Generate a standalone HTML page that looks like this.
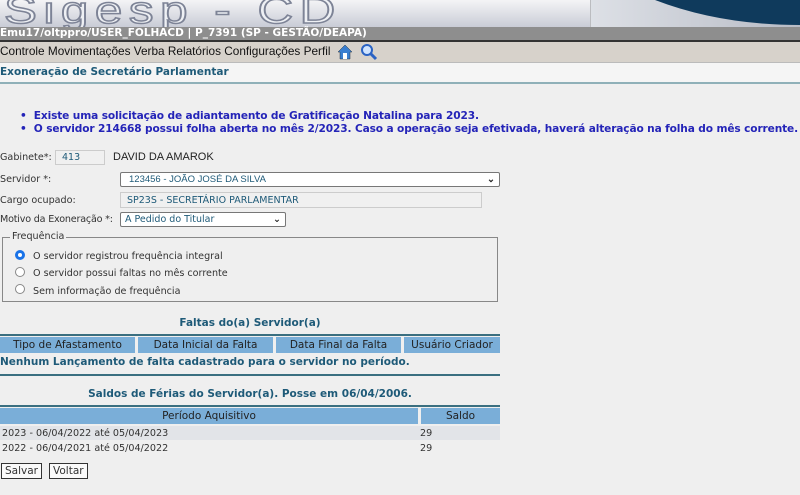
<!DOCTYPE html>
<html><head><meta charset="utf-8"><style>
body{margin:0;width:800px;height:495px;overflow:hidden;background:#efefef;font-family:"DejaVu Sans","Liberation Sans",sans-serif;font-size:10px;color:#333;position:relative}
.abs{position:absolute}
#hdr{left:0;top:0;width:800px;height:27px;background:linear-gradient(#f4f4f6,#c9ccd6);overflow:hidden}
#logo{left:4px;top:-10px;font-family:"Liberation Sans",sans-serif;font-size:38px;color:#eef0f4;-webkit-text-stroke:1.5px #7d8396;letter-spacing:5px;transform:scaleX(1.3);transform-origin:left;white-space:nowrap}
#swoosh{right:0;top:0}
#usr{left:0;top:27px;width:800px;height:13px;background:#8e8e8e;color:#fff;font-weight:bold;font-size:10.5px;line-height:13px;border-bottom:2px solid #333;white-space:nowrap}
#menu{left:0;top:42px;width:800px;height:20px;background:#d7d2cb;font-family:"Liberation Sans",sans-serif;font-size:11.8px;color:#111;line-height:18px;border-bottom:1px solid #bbb;white-space:nowrap}
#ttl{left:0;top:63px;width:800px;height:19px;background:#f5f5f5;color:#1e5a78;font-weight:bold;font-size:10.5px;line-height:18px;border-bottom:2px solid #8fb0b8}
.msg{color:#2424b8;font-weight:bold;font-size:10.6px;left:20px;white-space:nowrap;letter-spacing:-0.13px}
.lbl{font-size:9.6px;color:#333;white-space:nowrap}
.inp{background:#f0f0f0;border:1px solid #ccc;height:14px;font-size:9.5px;line-height:14px;color:#1e5a78;padding-left:6px;box-sizing:border-box}
.sel{background:#fff;border:1px solid #777;border-radius:2px;height:15px;font-size:9.5px;line-height:13px;color:#1e5a78;padding-left:4px;box-sizing:border-box}
.chev{position:absolute;right:4px;top:0;font-weight:bold;color:#222}
.radio{width:10px;height:10px;border:1px solid #888;border-radius:50%;background:#fff;box-sizing:border-box}
th{background:#7aaed8;font-weight:normal;color:#222;font-size:10.5px;padding:0;height:16px;border-right:3px solid #efefef}
.hd{color:#1e5a78;font-weight:bold;font-size:10.5px;white-space:nowrap}
.btn{border:1px solid #333;background:#fafafa;font-size:10.5px;height:16px;line-height:14px;padding:0 3px;box-sizing:border-box;color:#333}
</style></head><body>
<div id="hdr" class="abs">
<div id="logo" class="abs">Sigesp&nbsp;-&nbsp;CD</div>
<svg id="swoosh" class="abs" width="210" height="27"><defs><linearGradient id="g"><stop offset="0" stop-color="#dde0e6"/><stop offset="1" stop-color="#b8bcc6"/></linearGradient></defs><rect x="0" y="0" width="210" height="27" fill="url(#g)"/><line x1="0" y1="0" x2="0" y2="27" stroke="#999"/><path d="M65 0 Q130 25 210 25 L210 0 Z" fill="#0f3a5c"/></svg>
</div>
<div id="usr" class="abs">Emu17/oltppro/USER_FOLHACD | P_7391 (SP - GESTÃO/DEAPA)</div>
<div id="menu" class="abs">Controle Movimentações Verba Relatórios Configurações Perfil
<svg style="position:absolute;left:336px;top:1px" width="18" height="18"><path d="M2 9 L9 2 L16 9 L14 9 L14 16 L4 16 L4 9Z" fill="#3a7fd0" stroke="#234" stroke-width="0.5"/><rect x="7" y="10" width="4" height="6" fill="#fff"/></svg>
<svg style="position:absolute;left:360px;top:1px" width="18" height="18"><circle cx="7" cy="7" r="5" fill="#cfe4ff" stroke="#2a63c4" stroke-width="2"/><line x1="11" y1="11" x2="16" y2="16" stroke="#2a63c4" stroke-width="3"/></svg>
</div>
<div id="ttl" class="abs">Exoneração de Secretário Parlamentar</div>
<div class="abs msg" style="top:110px">•&nbsp; Existe uma solicitação de adiantamento de Gratificação Natalina para 2023.</div>
<div class="abs msg" style="top:123px">•&nbsp; O servidor 214668 possui folha aberta no mês 2/2023. Caso a operação seja efetivada, haverá alteração na folha do mês corrente.</div>

<div class="abs lbl" style="left:0;top:152px">Gabinete*:</div>
<div class="abs inp" style="left:55px;top:150px;width:50px;height:15px">413</div>
<div class="abs" style="left:113px;top:151px;font-family:'Liberation Sans',sans-serif;font-size:11px;color:#222">DAVID DA AMAROK</div>
<div class="abs lbl" style="left:0;top:174px">Servidor *:</div>
<div class="abs sel" style="left:120px;top:172px;width:380px;font-family:'Liberation Sans',sans-serif;padding-left:8px">123456 - JOÃO JOSÉ DA SILVA<span class="chev">⌄</span></div>
<div class="abs lbl" style="left:0;top:195px">Cargo ocupado:</div>
<div class="abs inp" style="left:120px;top:192px;width:362px;height:16px;line-height:16px">SP23S - SECRETÁRIO PARLAMENTAR</div>
<div class="abs lbl" style="left:0;top:214px;letter-spacing:-0.2px">Motivo da Exoneração *:</div>
<div class="abs sel" style="left:120px;top:212px;width:166px">A Pedido do Titular<span class="chev">⌄</span></div>
<div class="abs" style="left:2px;top:237px;width:494px;height:63px;border:1px solid #888"></div>
<div class="abs lbl" style="left:10px;top:231px;background:#efefef;padding:0 2px">Frequência</div>
<div class="abs radio" style="left:15px;top:250px;border:3px solid #1a73e8"></div>
<div class="abs lbl" style="left:33px;top:251px">O servidor registrou frequência integral</div>
<div class="abs radio" style="left:15px;top:267px"></div>
<div class="abs lbl" style="left:33px;top:268px">O servidor possui faltas no mês corrente</div>
<div class="abs radio" style="left:15px;top:284px"></div>
<div class="abs lbl" style="left:33px;top:286px">Sem informação de frequência</div>

<div class="abs hd" style="left:0;top:317px;width:500px;text-align:center">Faltas do(a) Servidor(a)</div>
<div class="abs" style="left:0;top:334px;width:500px;border-top:2px solid #3a6f80"></div>
<table class="abs" style="left:0;top:337px;width:503px;border-collapse:collapse"><tr><th style="width:135px">Tipo de Afastamento</th><th style="width:135px">Data Inicial da Falta</th><th style="width:125px">Data Final da Falta</th><th>Usuário Criador</th></tr></table>
<div class="abs hd" style="left:0;top:356px">Nenhum Lançamento de falta cadastrado para o servidor no período.</div>
<div class="abs" style="left:0;top:374px;width:500px;border-top:2px solid #3a6f80"></div>
<div class="abs hd" style="left:0;top:388px;width:500px;text-align:center">Saldos de Férias do Servidor(a). Posse em 06/04/2006.</div>
<div class="abs" style="left:0;top:405px;width:500px;border-top:2px solid #3a6f80"></div>
<table class="abs" style="left:0;top:408px;width:503px;border-collapse:collapse"><tr><th style="width:418px">Período Aquisitivo</th><th>Saldo</th></tr></table>
<div class="abs" style="left:0;top:426px;width:500px;height:14px;background:#e2e4e8"></div>
<div class="abs lbl" style="left:2px;top:428px">2023 - 06/04/2022 até 05/04/2023</div>
<div class="abs lbl" style="left:420px;top:428px">29</div>
<div class="abs lbl" style="left:2px;top:443px">2022 - 06/04/2021 até 05/04/2022</div>
<div class="abs lbl" style="left:420px;top:443px">29</div>
<div class="abs btn" style="left:1px;top:463px">Salvar</div>
<div class="abs btn" style="left:49px;top:463px">Voltar</div>
</body></html>
